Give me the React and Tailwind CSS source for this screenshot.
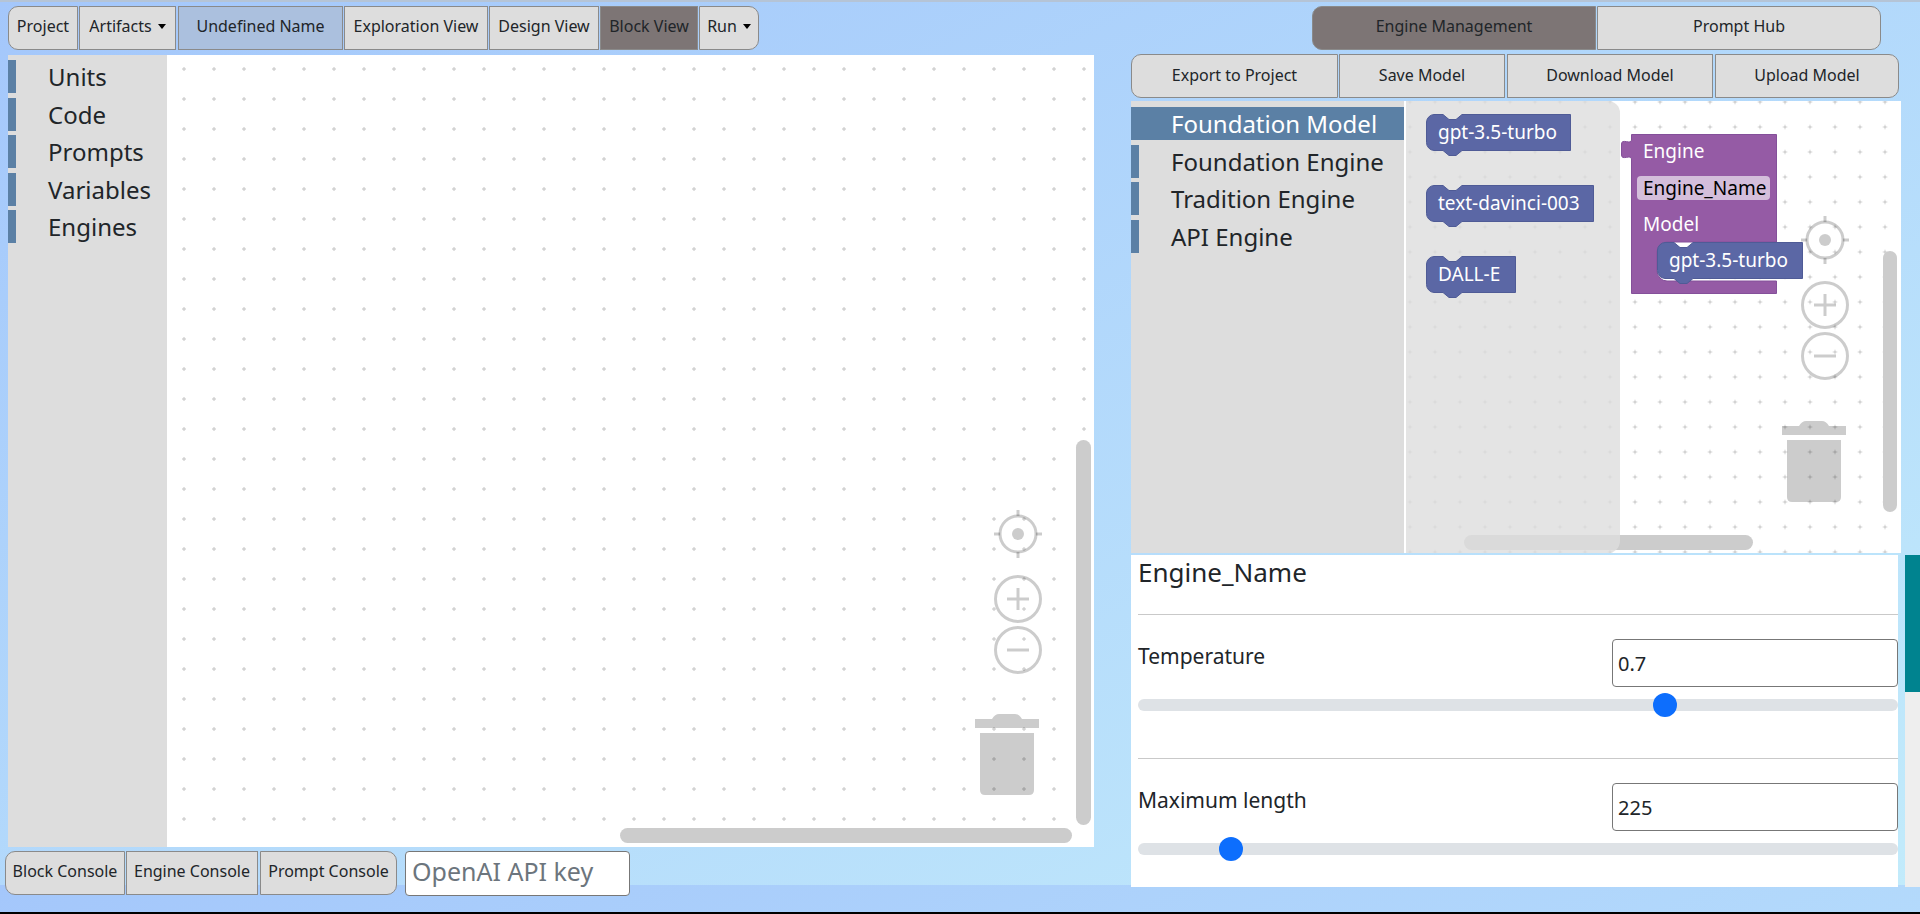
const grid = (id, step, ox, oy) => (
  <svg className="absolute inset-0 h-full w-full">
    <defs>
      <pattern id={id} width={step} height={step} patternUnits="userSpaceOnUse" x={ox} y={oy}>
        <path d={`M${step / 2 - 2} ${step / 2}h4M${step / 2} ${step / 2 - 2}v4`} stroke="#c4c4c4" strokeWidth="1" />
      </pattern>
    </defs>
    <rect width="100%" height="100%" fill={`url(#${id})`} />
  </svg>
);

function Target({ className }) {
  return (
    <svg viewBox="0 0 48 48" fill="none" stroke="#000" strokeOpacity="0.2" className={className}>
      <circle cx="24" cy="24" r="18" strokeWidth="3" />
      <circle cx="24" cy="24" r="6" fill="#000" fillOpacity="0.2" stroke="none" />
      <path d="M24 0v6M24 42v6M0 24h6M42 24h6" strokeWidth="3" />
    </svg>
  );
}

function Zoom({ minus, className }) {
  return (
    <svg viewBox="0 0 48 48" fill="none" stroke="#000" strokeOpacity="0.2" className={className}>
      <circle cx="24" cy="24" r="22.5" strokeWidth="3" />
      <path d={minus ? "M13 24h22" : "M13 24h22M24 13v22"} strokeWidth="3" />
    </svg>
  );
}

function Trash({ className }) {
  return (
    <svg viewBox="0 0 64 81" className={className} fill="#000" fillOpacity="0.2">
      <path d="M0 14V5h17q3-5 7-5h16q4 0 7 5h17v9z" />
      <path d="M5 19h54v57q0 5-5 5H10q-5 0-5-5z" />
    </svg>
  );
}

function Controls({ className }) {
  return (
    <div className={`absolute flex flex-col items-center ${className}`}>
      <Target className="h-12 w-12" />
      <Zoom className="mt-[17px] h-12 w-12" />
      <Zoom minus className="mt-[3px] h-12 w-12" />
    </div>
  );
}

function Toolbox({ items, active, className }) {
  return (
    <div className={`flex shrink-0 flex-col bg-[#dddddd] ${className}`}>
      {items.map((t) => (
        <div
          key={t}
          className={`mb-[4.6px] h-[33px] border-l-8 border-[#5b80a5] pl-[32px] pr-2 text-[24px] leading-[34px] ${
            t === active ? "bg-[#5b80a5] text-white" : "text-[#212529]"
          }`}
        >
          {t}
        </div>
      ))}
    </div>
  );
}

function Value({ label, width, className }) {
  const d = `M8 .5h9l6 5h7l6-5H${width - 0.5}V36.5H36l-6 5h-7l-6-5H8a8 8 0 0 1-7.5-8V8A8 8 0 0 1 8 .5z`;
  return (
    <div className={`absolute h-[37px] text-[19px] leading-[36px] text-white ${className}`} style={{ width }}>
      <svg className="absolute inset-0 h-[42px] w-full overflow-visible">
        <path d={d} fill="#5b67a5" stroke="#4f5b96" />
      </svg>
      <span className="relative block pl-[12px]">{label}</span>
    </div>
  );
}

function Tab({ className = "", children }) {
  return (
    <button className={`flex h-full items-center justify-center border border-[#8a8a8a] bg-[#dddddd] text-[#212529] ${className}`}>
      {children}
    </button>
  );
}

function Caret() {
  return <span className="ml-[6px] inline-block border-x-[4px] border-t-[5px] border-x-transparent border-t-black" />;
}

function Param({ label, value, thumb }) {
  return (
    <div className="flex h-[144px] flex-col border-t border-[#c9c9c9] pt-[24px]">
      <div className="flex items-start justify-between">
        <span className="pt-[1px] text-[21px] leading-[32px] text-[#212529]">{label}</span>
        <input
          readOnly
          value={value}
          className="h-[48px] w-[286px] rounded-[4px] border border-[#777] bg-white px-[5px] text-[20px] text-[#212529] outline-none"
        />
      </div>
      <div className="relative mt-[12px] h-[12px] rounded-full bg-[#dee2e6]">
        <div className="absolute top-[-6px] h-6 w-6 rounded-full bg-[#0d6efd]" style={{ left: thumb }} />
      </div>
    </div>
  );
}

export default function App() {
  return (
    <div className="flex h-[914px] w-[1920px] flex-col overflow-hidden border-t-2 border-b-2 border-t-[#b5c4d6] border-b-black bg-gradient-to-br from-[#a4c7fb] to-[#c2ebfb] bg-[size:100%_883px] font-['Noto_Sans','Open_Sans',sans-serif] text-[16px]">
      <div className="flex flex-1">
        {/* left column */}
        <div className="flex w-[1131px] flex-col pl-[8px]">
          <div className="mt-[4px] flex h-[44px] gap-[1px] whitespace-nowrap">
            <Tab className="w-[70px] rounded-l-[10px] pb-[4px]">Project</Tab>
            <Tab className="w-[97px] pb-[4px]">Artifacts<Caret /></Tab>
            <Tab className="ml-[1px] w-[165px] bg-[#abc0de]! pb-[4px]">Undefined Name</Tab>
            <Tab className="w-[144px] pb-[4px]">Exploration View</Tab>
            <Tab className="w-[110px] pb-[4px]">Design View</Tab>
            <Tab className="w-[98px] bg-[#7d7575]! pb-[4px]">Block View</Tab>
            <Tab className="w-[60px] rounded-r-[10px] pb-[4px]">Run<Caret /></Tab>
          </div>
          <div className="relative mt-[5px] flex h-[792px] w-[1086px] bg-white">
            {grid("gridLeft", 30, 11, -1)}
            <Toolbox className="relative z-10 w-[159px] pt-[5px]" items={["Units", "Code", "Prompts", "Variables", "Engines"]} />
            <Controls className="right-[52px] top-[455px]" />
            <Trash className="absolute right-[55px] top-[659px] h-[81px] w-[64px]" />
            <div className="absolute right-[3px] top-[385px] h-[385px] w-[15px] rounded-full bg-[#cccccc]" />
            <div className="absolute left-[612px] top-[773px] h-[15px] w-[452px] rounded-full bg-[#cccccc]" />
          </div>
          <div className="mt-[4px] flex h-[44px] items-stretch whitespace-nowrap">
            <div className="-ml-[3px] flex h-[44px] gap-[1px]">
              <Tab className="w-[120px] rounded-l-[10px] pb-[5px]">Block Console</Tab>
              <Tab className="w-[132px] pb-[5px]">Engine Console</Tab>
              <Tab className="ml-[1px] w-[137px] rounded-r-[10px] pb-[5px]">Prompt Console</Tab>
            </div>
            <input
              readOnly
              placeholder="OpenAI API key"
              className="ml-[8px] h-[45px] w-[225px] rounded-[4px] border border-[#777] bg-white px-[6px] pb-[5px] text-[25px] outline-none placeholder:text-[#6c757d]"
            />
          </div>
        </div>

        {/* right column */}
        <div className="flex flex-1 flex-col">
          <div className="mt-[4px] flex h-[44px] justify-end pr-[39px] whitespace-nowrap">
            <Tab className="w-[284px] rounded-l-[10px] bg-[#7d7575]! pb-[4px]">Engine Management</Tab>
            <Tab className="ml-[1px] w-[284px] rounded-r-[10px] pb-[4px]">Prompt Hub</Tab>
          </div>
          <div className="mt-[4px] flex h-[44px] gap-[2px] whitespace-nowrap">
            <Tab className="mr-[-1px] w-[207px] rounded-l-[10px] pb-[2px]">Export to Project</Tab>
            <Tab className="w-[166px] pb-[2px]">Save Model</Tab>
            <Tab className="w-[206px] pb-[2px]">Download Model</Tab>
            <Tab className="w-[184px] rounded-r-[10px] pb-[2px]">Upload Model</Tab>
          </div>
          <div className="relative mt-[3px] flex h-[452px] w-[770px] overflow-hidden bg-white">
            {grid("gridRight", 25, 16.5, 13.5)}
            <Toolbox
              className="relative z-10 w-[273px] pt-[6px]"
              active="Foundation Model"
              items={["Foundation Model", "Foundation Engine", "Tradition Engine", "API Engine"]}
            />
            <Controls className="right-[52px] top-[115px]" />
            <Trash className="absolute right-[55px] top-[320px] h-[81px] w-[64px]" />
            <div className="absolute right-[4px] top-[150px] h-[261px] w-[14px] rounded-full bg-[#cccccc]" />
            <div className="absolute left-[333px] top-[434px] h-[15px] w-[289px] rounded-full bg-[#cccccc]" />
            <div className="absolute left-[275px] top-0 z-10 h-full w-[214px] rounded-r-[12px] bg-[#dddddd]/80" />

            <Value label="gpt-3.5-turbo" width={145} className="left-[295px] top-[13px] z-20" />
            <Value label="text-davinci-003" width={168} className="left-[295px] top-[84px] z-20" />
            <Value label="DALL-E" width={90} className="left-[295px] top-[155px] z-20" />

            <div className="absolute left-[500px] top-[33px] z-20 h-[160px] w-[146px] text-[19px] text-white">
              <svg className="absolute inset-0 h-full w-full overflow-visible">
                <path
                  d="M.5 .5H145.5V108H36a10 10 0 0 0-10 10V137a10 10 0 0 0 10 10H145.5V159.5H.5V25c0-5-10 2-10-4V10c0-6 10 1 10-4z"
                  fill="#955ba5"
                  stroke="#84509a"
                />
              </svg>
              <span className="absolute left-[12px] top-[-1px] leading-[36px]">Engine</span>
              <span className="absolute left-[6px] top-[42px] h-[24px] w-[133px] rounded-[4px] bg-[#d4bedb] px-[6px] leading-[24px] text-black">Engine_Name</span>
              <span className="absolute left-[12px] top-[72px] leading-[36px]">Model</span>
            </div>
            <Value label="gpt-3.5-turbo" width={146} className="left-[526px] top-[141px] z-20" />
          </div>

          <div className="mt-[2px] flex h-[332px]">
            <div className="w-[767px] overflow-hidden bg-white pl-[7px]">
              <div className="h-[59px] text-[26px] leading-[34px] text-[#212529]">Engine_Name</div>
              <div className="w-[760px]">
                <Param label="Temperature" value="0.7" thumb="515px" />
                <Param label="Maximum length" value="225" thumb="81px" />
              </div>
            </div>
            <div className="ml-[7px] w-[15px] bg-[#eeeeee]">
              <div className="h-[137px] bg-[#00838f]" />
            </div>
          </div>
        </div>
      </div>
    </div>
  );
}
